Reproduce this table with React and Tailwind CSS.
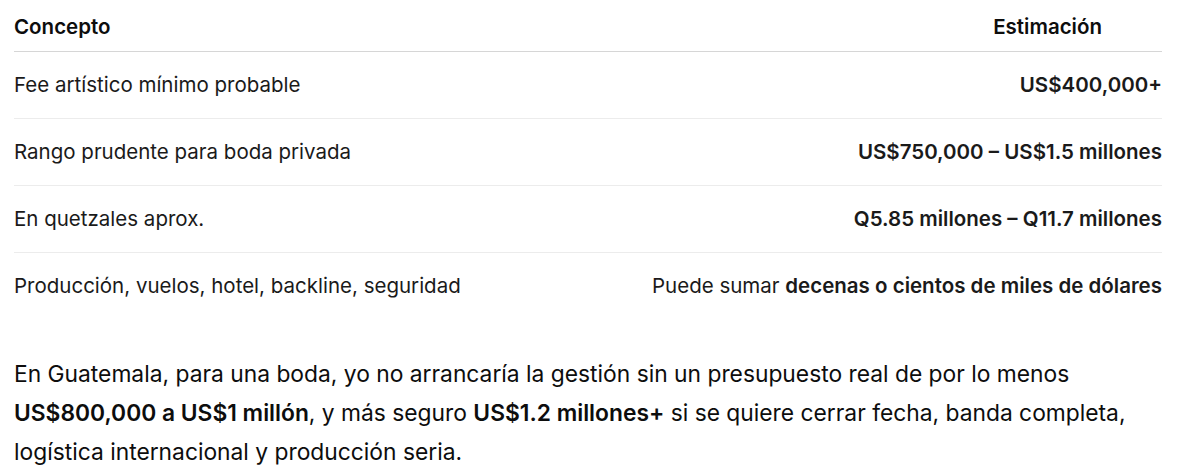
export default function App() {
  const rows = [
    { concepto: "Fee artístico mínimo probable", valor: <b className="font-semibold">US$400,000+</b> },
    { concepto: "Rango prudente para boda privada", valor: <b className="font-semibold">US$750,000 – US$1.5 millones</b> },
    { concepto: "En quetzales aprox.", valor: <b className="font-semibold">Q5.85 millones – Q11.7 millones</b> },
    {
      concepto: "Producción, vuelos, hotel, backline, seguridad",
      valor: (
        <>
          Puede sumar <b className="font-semibold">decenas o cientos de miles de dólares</b>
        </>
      ),
    },
  ]

  return (
    <div className="w-[1200px] h-[470px] bg-white text-[#0d0d0d] font-['Inter',sans-serif] overflow-hidden">
      <div className="pl-[14px] pr-[38px]">
        <table className="w-full border-collapse">
          <thead>
            <tr className="border-b border-[#d6d6d6]">
              <th className="text-left font-semibold text-[20.5px] leading-[28px] pt-[13px] pb-[10px]">Concepto</th>
              <th className="text-right font-semibold text-[20.5px] leading-[28px] pt-[13px] pb-[10px] pr-[60px]">Estimación</th>
            </tr>
          </thead>
          <tbody>
            {rows.map((row, i) => (
              <tr key={i} className={i < rows.length - 1 ? "border-b border-[#ececec]" : ""}>
                <td className="text-left text-[20.5px] leading-[28px] py-[19px] text-[#1a1a1a]">{row.concepto}</td>
                <td className="text-right text-[20.5px] leading-[28px] py-[19px] text-[#1a1a1a]">{row.valor}</td>
              </tr>
            ))}
          </tbody>
        </table>

        <p className="mt-[35px] text-[22.8px] leading-[39px] text-[#0d0d0d]">
          En Guatemala, para una boda, yo no arrancaría la gestión sin un presupuesto real de por lo menos{" "}
          <b className="font-semibold">US$800,000 a US$1 millón</b>, y más seguro{" "}
          <b className="font-semibold">US$1.2 millones+</b> si se quiere cerrar fecha, banda completa, logística
          internacional y producción seria.
        </p>
      </div>
    </div>
  )
}
